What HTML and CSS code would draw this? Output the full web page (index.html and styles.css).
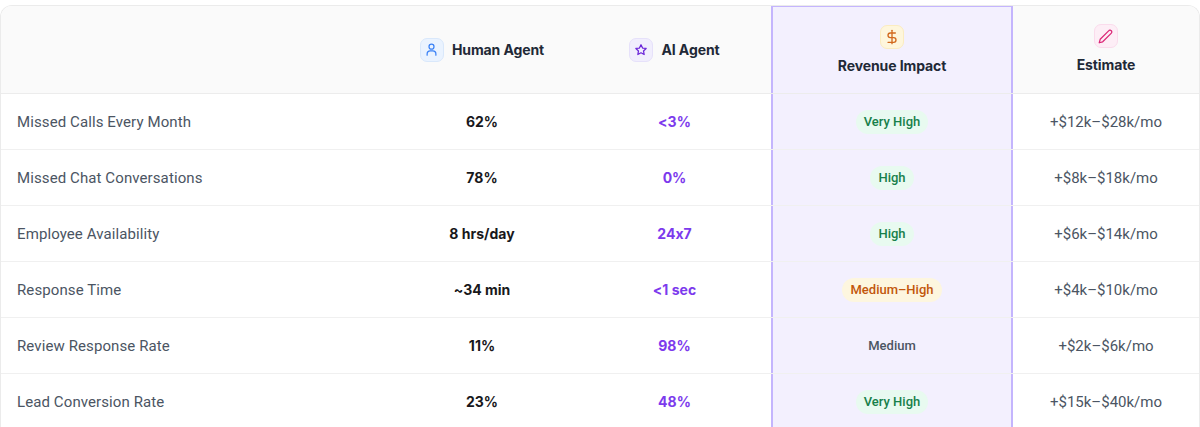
FILE: index.html
```html
<!DOCTYPE html>
<html>
<head>
<meta charset="utf-8">
<link rel="stylesheet" href="styles.css">
</head>
<body>
<div class="card">
  <div class="row head">
    <div class="cell label"></div>
    <div class="cell center">
      <div class="hinline">
        <span class="ico ico-blue">
          <svg width="15" height="15" viewBox="0 0 24 24" fill="none" stroke="currentColor" stroke-width="2" stroke-linecap="round" stroke-linejoin="round"><circle cx="12" cy="7.5" r="4"/><path d="M5 21v-2a5 5 0 0 1 5-5h4a5 5 0 0 1 5 5v2"/></svg>
        </span>
        <span class="htext">Human Agent</span>
      </div>
    </div>
    <div class="cell center">
      <div class="hinline">
        <span class="ico ico-purple">
          <svg width="14" height="14" viewBox="0 0 24 24" fill="none" stroke="currentColor" stroke-width="2.2" stroke-linejoin="round"><path d="M12 3l2.7 5.6 6.1.8-4.5 4.2 1.1 6.1L12 16.8l-5.4 2.9 1.1-6.1-4.5-4.2 6.1-.8z"/></svg>
        </span>
        <span class="htext">AI Agent</span>
      </div>
    </div>
    <div class="cell center rev revtop">
      <div class="hstack">
        <span class="ico ico-amber">
          <svg width="16" height="16" viewBox="0 0 24 24" fill="none" stroke="currentColor" stroke-width="2" stroke-linecap="round" stroke-linejoin="round"><path d="M12 2v20"/><path d="M17 6H9.5a3.5 3.5 0 0 0 0 7h5a3.5 3.5 0 0 1 0 7H6"/></svg>
        </span>
        <span class="htext">Revenue Impact</span>
      </div>
    </div>
    <div class="cell center">
      <div class="hstack">
        <span class="ico ico-pink">
          <svg width="15" height="15" viewBox="0 0 24 24" fill="none" stroke="currentColor" stroke-width="2" stroke-linecap="round" stroke-linejoin="round"><path d="M17 3a2.85 2.85 0 1 1 4 4L7.5 20.5 2 22l1.5-5.5Z"/></svg>
        </span>
        <span class="htext">Estimate</span>
      </div>
    </div>
  </div>

  <div class="row">
    <div class="cell label">Missed Calls Every Month</div>
    <div class="cell center human">62%</div>
    <div class="cell center ai">&lt;3%</div>
    <div class="cell center rev"><span class="badge green">Very High</span></div>
    <div class="cell center est">+$12k–$28k/mo</div>
  </div>
  <div class="row">
    <div class="cell label">Missed Chat Conversations</div>
    <div class="cell center human">78%</div>
    <div class="cell center ai">0%</div>
    <div class="cell center rev"><span class="badge green">High</span></div>
    <div class="cell center est">+$8k–$18k/mo</div>
  </div>
  <div class="row">
    <div class="cell label">Employee Availability</div>
    <div class="cell center human">8 hrs/day</div>
    <div class="cell center ai">24x7</div>
    <div class="cell center rev"><span class="badge green">High</span></div>
    <div class="cell center est">+$6k–$14k/mo</div>
  </div>
  <div class="row">
    <div class="cell label">Response Time</div>
    <div class="cell center human">~34 min</div>
    <div class="cell center ai">&lt;1 sec</div>
    <div class="cell center rev"><span class="badge amber">Medium–High</span></div>
    <div class="cell center est">+$4k–$10k/mo</div>
  </div>
  <div class="row">
    <div class="cell label">Review Response Rate</div>
    <div class="cell center human">11%</div>
    <div class="cell center ai">98%</div>
    <div class="cell center rev"><span class="badge grey">Medium</span></div>
    <div class="cell center est">+$2k–$6k/mo</div>
  </div>
  <div class="row">
    <div class="cell label">Lead Conversion Rate</div>
    <div class="cell center human">23%</div>
    <div class="cell center ai">48%</div>
    <div class="cell center rev"><span class="badge green">Very High</span></div>
    <div class="cell center est">+$15k–$40k/mo</div>
  </div>
</div>
</body>
</html>
```

FILE: styles.css
```css
* { box-sizing: border-box; }
html, body { margin: 0; padding: 0; background: #ffffff; }
body {
  font-family: Roboto, "Liberation Sans", sans-serif;
  color: #374151;
  overflow: hidden;
}
.card {
  margin-top: 5px;
  border: 1px solid #ebebeb;
  border-bottom: none;
  border-radius: 12px 12px 0 0;
  overflow: hidden;
  background: #fff;
}
.row {
  display: grid;
  grid-template-columns: 385px 192px 193px 242px 1fr;
  height: 56px;
  border-bottom: 1px solid #f0f0f0;
}
.row.head {
  height: 88px;
  background: #fafafa;
  border-bottom: 1px solid #ececec;
}
.cell {
  display: flex;
  align-items: center;
  min-width: 0;
}
.center { justify-content: center; }
.label {
  padding-left: 16px;
  font-size: 15px;
  color: #4b5563;
  letter-spacing: 0.1px;
}
.rev {
  background: #f3f0fe;
  border-left: 2px solid #c4b5fd;
  border-right: 2px solid #c4b5fd;
}
.revtop { border-top: 2px solid #c4b5fd; margin-top: -1px; }
.hinline {
  display: flex;
  align-items: center;
  gap: 8px;
}
.hstack {
  display: flex;
  flex-direction: column;
  align-items: center;
  gap: 8px;
  margin-top: -2px;
}
.htext {
  font-family: Inter, "Liberation Sans", sans-serif;
  font-weight: 700;
  font-size: 14px;
  color: #1f2937;
  letter-spacing: -0.1px;
}
.ico {
  width: 24px;
  height: 24px;
  border-radius: 7px;
  display: inline-flex;
  align-items: center;
  justify-content: center;
  border: 1px solid transparent;
}
.ico-blue { background: #eaf3ff; border-color: #d9e8fb; color: #3b82f6; }
.ico-purple { background: #f1eefd; border-color: #e6e1fa; color: #6d28d9; }
.ico-amber { background: #fef6dc; border-color: #fbecc0; color: #d2691e; }
.ico-pink { background: #fdeef6; border-color: #fadcec; color: #db2777; }
.human, .ai {
  font-family: Inter, "Liberation Sans", sans-serif;
  font-weight: 700;
  font-size: 14px;
  font-feature-settings: "calt" 0;
}
.human { color: #18181b; }
.ai { color: #7c3aed; }
.est {
  font-size: 15px;
  color: #4b5563;
}
.badge {
  font-size: 13px;
  font-weight: 500;
  padding: 4px 8px;
  border-radius: 999px;
  line-height: 16px;
}
.green { background: #e8faf0; color: #17804a; }
.amber { background: #fdf6df; color: #c2560c; }
.grey { background: transparent; color: #4b5563; }
```
